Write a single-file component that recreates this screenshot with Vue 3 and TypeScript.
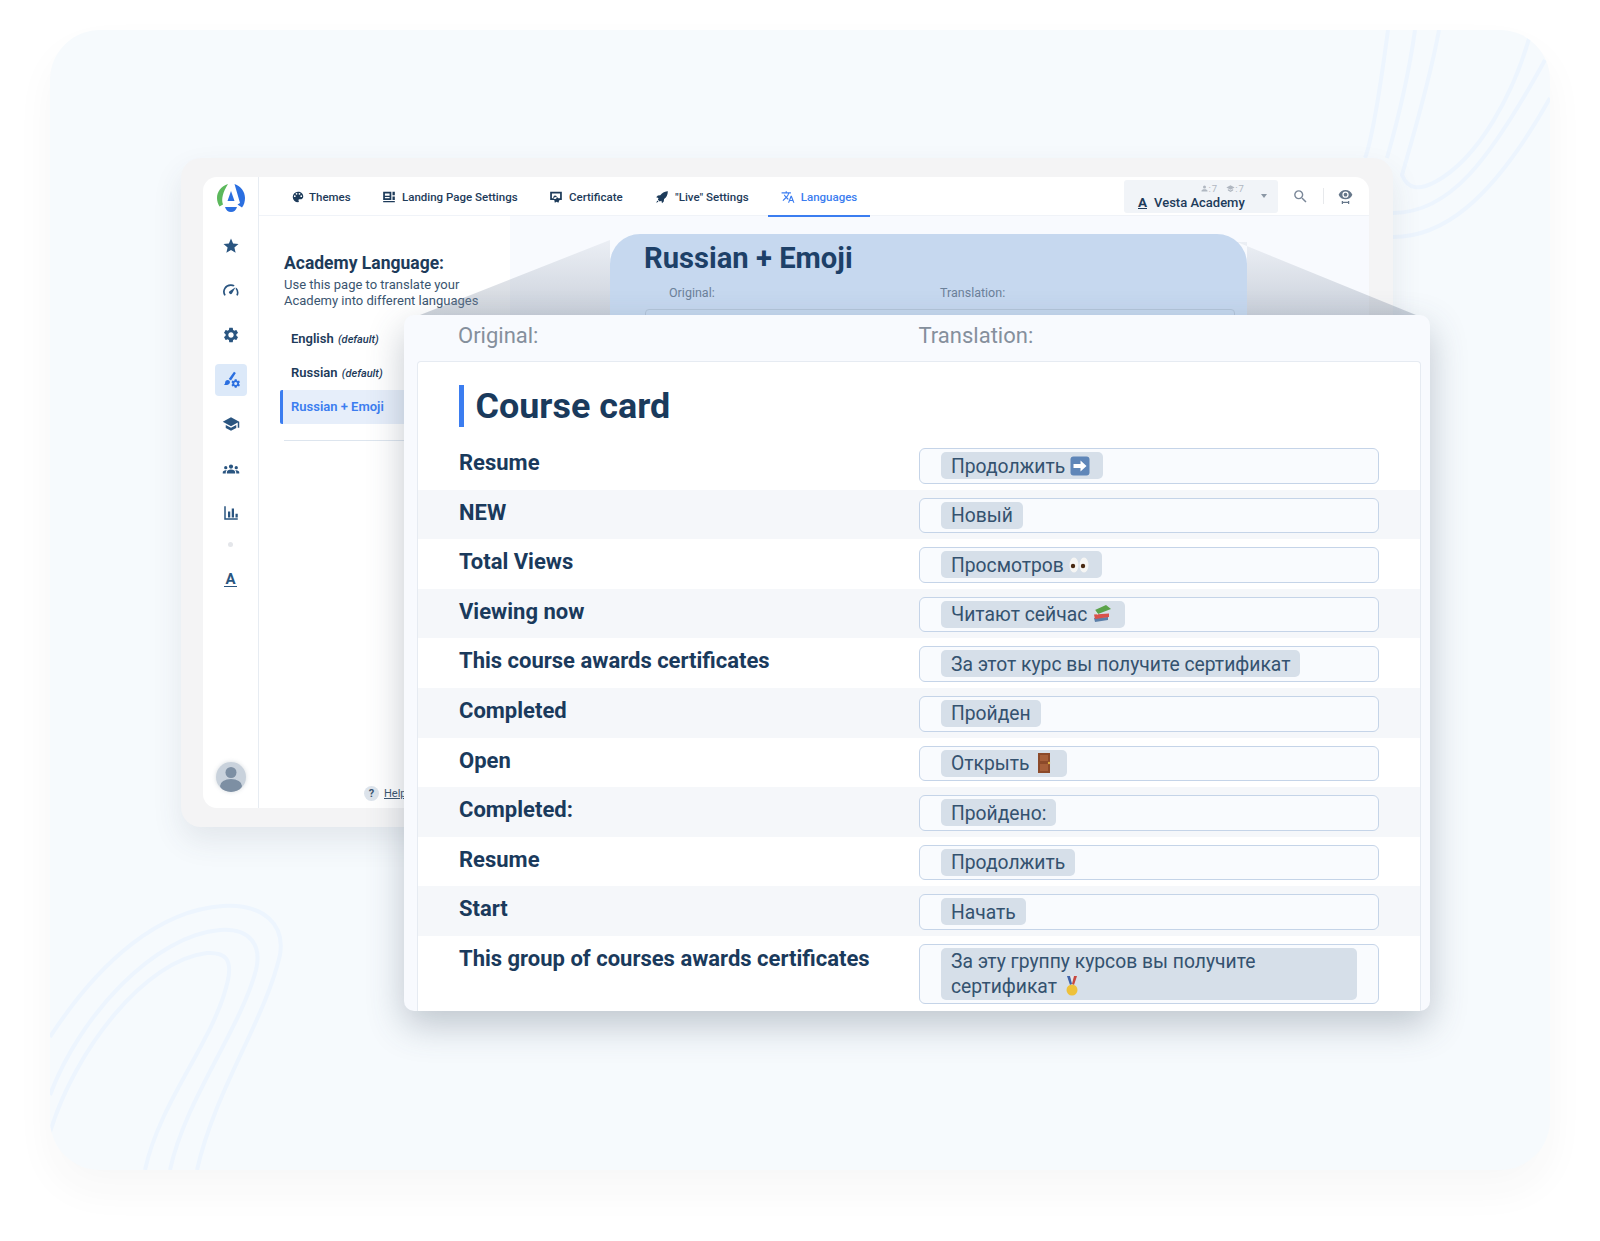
<template>
  <div class="page">
    <section class="panel">
      <svg class="curves" viewBox="0 0 1500 1140" fill="none">
        <path d="M0 1007C50 930 110 880 173 876C215 874 235 895 230 925C215 990 165 1060 147 1140" />
        <path d="M0 1065C30 985 105 905 170 900C200 898 212 915 206 940C190 1000 135 1070 120 1140" />
        <path d="M0 1102C25 1020 95 930 157 923C176 922 182 930 178 950C165 1010 110 1070 95 1140" />
        <path d="M1338 0C1330 60 1322 110 1315 128" />
        <path d="M1365 0C1358 50 1345 100 1337 128" />
        <path d="M1389 0C1380 50 1362 110 1352 145C1358 160 1370 160 1385 152C1430 128 1465 60 1480 5" />
        <path d="M1343 183C1400 183 1440 130 1495 30" />
        <path d="M1343 207C1390 207 1440 175 1500 68" />
      </svg>

      <div class="window">
        <div class="app">
          <aside class="rail">
            <svg class="logo" viewBox="0 0 28 28">
              <path d="M11 0C4 2 0 8 0 14c0 3 1 6 2.500 8.500L6 20.500C4 15 6 8 11 0z" fill="#5cb85c" />
              <path d="M17.500 0C24 2 28 8 28 14c0 3.500-1 7-3 9.500l-4.500-3L23 19z" fill="#2b6fe0" />
              <path d="M14 7l3.500 10h-7z" fill="#2b6fe0" />
              <path d="M8 23h12c-.8 3-3 5-6 5s-5.200-2-6-5z" fill="#2b6fe0" />
            </svg>
            <nav class="rail-icons">
              <div v-for="icon in railIcons" :key="icon.name" class="rail-item" :class="{ active: icon.name === 'brush' }">
                <svg viewBox="0 0 24 24" class="rail-svg">
                  <path v-for="(d, i) in icon.paths" :key="i" :d="d" />
                </svg>
              </div>
            </nav>
            <span class="rail-dot"></span>
            <span class="rail-a">A</span>
            <div class="avatar">
              <svg viewBox="0 0 30 30">
                <circle cx="15" cy="10.500" r="5.500" fill="#7d8fa3" />
                <ellipse cx="15" cy="24" rx="11" ry="7" fill="#7d8fa3" />
              </svg>
            </div>
          </aside>

          <div class="main">
            <header class="topbar">
              <a v-for="tab in tabs" :key="tab.label" class="tab" :class="{ current: tab.current }" :style="{ width: tab.width + 'px' }">
                <svg viewBox="0 0 24 24" class="tab-svg"><path :d="tab.icon" /></svg>
                {{ tab.label }}
              </a>
              <div class="academy">
                <div class="academy-text">
                  <div class="stats">
                    <svg viewBox="0 0 24 24"><path d="M12 4a4 4 0 1 1 0 8 4 4 0 0 1 0-8zm0 10c4.400 0 8 1.800 8 4v2H4v-2c0-2.200 3.600-4 8-4z" /></svg>:7
                    <svg viewBox="0 0 24 24" class="cap"><path d="M5 13.180v4L12 21l7-3.820v-4L12 17zM12 3L1 9l11 6 11-6z" /></svg>:7
                  </div>
                  <div class="academy-name"><span class="under-a">A</span>Vesta Academy</div>
                </div>
                <span class="caret"></span>
              </div>
              <svg viewBox="0 0 24 24" class="search"><path d="M15.500 14h-.79l-.28-.27A6.470 6.470 0 0 0 16 9.500 6.500 6.500 0 1 0 9.500 16c1.610 0 3.090-.59 4.230-1.570l.27.28v.79l5 4.990L20.490 19l-4.990-5zm-6 0C7.010 14 5 11.990 5 9.500S7.010 5 9.500 5 14 7.010 14 9.500 11.990 14 9.500 14z" /></svg>
              <span class="divider"></span>
              <svg viewBox="0 0 24 24" class="eye">
                <path d="M12 1.500c-5 0-9 3-11 7.500 2 4.500 6 7.500 11 7.500s9-3 11-7.500c-2-4.500-6-7.500-11-7.500zm0 12.500a5 5 0 1 1 0-10 5 5 0 0 1 0 10zm0-8a3 3 0 1 0 0 6 3 3 0 0 0 0-6z" />
                <path d="M6 19h2v1.500h8V19h2v5h-2v-1.500H8V24H6z" />
              </svg>
            </header>

            <div class="body">
              <div class="languages">
                <h3>Academy Language:</h3>
                <p>Use this page to translate your<br />Academy into different languages</p>
                <ul>
                  <li>English <em>(default)</em></li>
                  <li>Russian <em>(default)</em></li>
                  <li class="selected">Russian + Emoji</li>
                </ul>
                <hr />
                <div class="help"><span class="help-mark">?</span><u>Help</u></div>
              </div>
              <div class="content">
                <div class="preview">
                  <h2>Russian + Emoji</h2>
                  <div class="preview-heads"><span>Original:</span><span>Translation:</span></div>
                  <div class="preview-box"></div>
                </div>
              </div>
            </div>
          </div>
        </div>
      </div>

      <svg class="wedge" viewBox="0 0 1500 1140">
        <defs>
          <linearGradient id="wedgeFill" x1="0" y1="0" x2="0" y2="1">
            <stop offset="0" stop-color="#8b99ad" stop-opacity="0.12" />
            <stop offset="1" stop-color="#7f8ca0" stop-opacity="0.38" />
          </linearGradient>
        </defs>
        <path d="M560 210L370 285H560z" fill="url(#wedgeFill)" />
        <path d="M1187 212L1366 285H1197V212z" fill="url(#wedgeFill)" />
      </svg>

      <div class="card">
        <div class="card-heads"><span>Original:</span><span>Translation:</span></div>
        <div class="sheet">
          <h1>Course card</h1>
          <div v-for="(row, i) in rows" :key="i" class="row">
            <div class="label">{{ row.label }}</div>
            <div class="field">
              <span class="chip">
                {{ row.text }}
                <svg v-if="row.emoji === 'arrow'" class="emoji" viewBox="0 0 20 20">
                  <rect x="0.500" y="0.500" width="19" height="19" rx="3" fill="#5f86b8" />
                  <path d="M3.500 8h7V4.500l6 5.500-6 5.500V12h-7z" fill="#fff" />
                </svg>
                <svg v-else-if="row.emoji === 'eyes'" class="emoji" viewBox="0 0 20 20">
                  <ellipse cx="5" cy="10" rx="4.500" ry="7.500" fill="#f6f6f4" />
                  <ellipse cx="15" cy="10" rx="4.500" ry="7.500" fill="#f6f6f4" />
                  <circle cx="4" cy="11" r="2.200" fill="#4a2a12" />
                  <circle cx="14" cy="11" r="2.200" fill="#4a2a12" />
                </svg>
                <svg v-else-if="row.emoji === 'books'" class="emoji" viewBox="0 0 20 20">
                  <path d="M2 14l14-1v3L3 18z" fill="#5c7fa8" />
                  <path d="M2 10.500l15-1v3.500L3 15z" fill="#d9524a" />
                  <path d="M3 6l11-5 5 4-13 5z" fill="#5aa34a" />
                  <path d="M3 6l3 4v1L3 8z" fill="#dfe5dc" />
                </svg>
                <svg v-else-if="row.emoji === 'door'" class="emoji" viewBox="0 0 20 20">
                  <rect x="4" y="0" width="12" height="20" fill="#8c4a2a" />
                  <rect x="6" y="2" width="8" height="6" fill="#a65f3a" />
                  <rect x="6" y="11" width="8" height="7" fill="#a65f3a" />
                  <circle cx="15" cy="10" r="1.200" fill="#e0b040" />
                </svg>
                <svg v-else-if="row.emoji === 'medal'" class="emoji" viewBox="0 0 20 20">
                  <path d="M5 0h3l2 8-2 1z" fill="#3f62a8" />
                  <path d="M15 0h-3l-2 8 2 1z" fill="#c9483f" />
                  <path d="M8.500 0h3L10 6z" fill="#e8e8e8" />
                  <circle cx="10" cy="14" r="5.500" fill="#eec13a" />
                </svg>
              </span>
            </div>
          </div>
        </div>
      </div>
    </section>
  </div>
</template>

<script setup lang="ts">
interface Row {
  label: string;
  text: string;
  emoji?: 'arrow' | 'eyes' | 'books' | 'door' | 'medal';
}

const rows: Row[] = [
  { label: 'Resume', text: 'Продолжить', emoji: 'arrow' },
  { label: 'NEW', text: 'Новый' },
  { label: 'Total Views', text: 'Просмотров', emoji: 'eyes' },
  { label: 'Viewing now', text: 'Читают сейчас', emoji: 'books' },
  { label: 'This course awards certificates', text: 'За этот курс вы получите сертификат' },
  { label: 'Completed', text: 'Пройден' },
  { label: 'Open', text: 'Открыть', emoji: 'door' },
  { label: 'Completed:', text: 'Пройдено:' },
  { label: 'Resume', text: 'Продолжить' },
  { label: 'Start', text: 'Начать' },
  { label: 'This group of courses awards certificates', text: 'За эту группу курсов вы получите сертификат', emoji: 'medal' },
];

const railIcons = [
  { name: 'star', paths: ['M12 17.270L18.180 21l-1.640-7.030L22 9.240l-7.190-.61L12 2 9.190 8.630 2 9.240l5.460 4.730L5.820 21z'] },
  { name: 'gauge', paths: ['M12 3a10 10 0 0 0-9 15.300l2-1.100A7.800 7.800 0 0 1 12 5.200c1.200 0 2.300.3 3.300.8l1.600-1.600A10 10 0 0 0 12 3zM21 18.300a10 10 0 0 0-1.600-10.800l-1.500 1.500a7.800 7.800 0 0 1 1.100 8.300zM18 7l-7.500 5a2.200 2.200 0 1 0 3 3z'] },
  { name: 'gear', paths: ['M19.140 12.940c.04-.3.06-.61.06-.94 0-.32-.02-.64-.07-.94l2.030-1.580a.49.49 0 0 0 .12-.61l-1.920-3.320a.488.488 0 0 0-.59-.22l-2.390.96c-.5-.38-1.030-.7-1.620-.94l-.36-2.540a.484.484 0 0 0-.48-.41h-3.840c-.24 0-.43.17-.47.41l-.36 2.540c-.59.24-1.130.57-1.620.94l-2.390-.96c-.22-.08-.47 0-.59.22L2.740 8.870c-.12.21-.08.47.12.61l2.030 1.580c-.05.3-.09.63-.09.94s.02.64.07.94l-2.030 1.580a.49.49 0 0 0-.12.61l1.920 3.320c.12.22.37.29.59.22l2.390-.96c.5.38 1.030.7 1.620.94l.36 2.54c.05.24.24.41.48.41h3.840c.24 0 .44-.17.47-.41l.36-2.540c.59-.24 1.130-.56 1.620-.94l2.390.96c.22.08.47 0 .59-.22l1.920-3.320c.12-.22.07-.47-.12-.61l-2.010-1.580zM12 15.600c-1.980 0-3.600-1.620-3.600-3.600s1.620-3.600 3.600-3.600 3.600 1.620 3.600 3.600-1.620 3.600-3.600 3.600z'] },
  { name: 'brush', paths: ['M16 1l2.500 1.800-6.500 9.700-3-1.800zM7.500 12c2.300 0 3.500 1.700 3 3.500-.6 2.300-3.500 3.500-8 3 1.800-1.200 1.300-2.300 1.800-4 .5-1.500 1.700-2.500 3.200-2.500z', 'M17 11h2.500l.4 1.600 1.200.7 1.600-.5 1.200 2.100-1.200 1.100v1.400l1.200 1.100-1.200 2.100-1.600-.5-1.200.7-.4 1.600H17l-.4-1.600-1.200-.7-1.600.5-1.200-2.100 1.200-1.100V16l-1.200-1.100 1.200-2.100 1.600.5 1.200-.7zm1.250 3.700a2 2 0 1 0 0 4 2 2 0 0 0 0-4z'] },
  { name: 'school', paths: ['M5 13.180v4L12 21l7-3.820v-4L12 17l-7-3.820zM12 3L1 9l11 6 9-4.910V17h2V9L12 3z'] },
  { name: 'groups', paths: ['M12 6a2.800 2.800 0 1 1 0 5.600A2.800 2.800 0 0 1 12 6zM5 8a2.200 2.200 0 1 1 0 4.400A2.200 2.200 0 0 1 5 8zm14 0a2.200 2.200 0 1 1 0 4.400A2.200 2.200 0 0 1 19 8zM12 12.800c3 0 5.500 1.500 5.500 3.400V18h-11v-1.800c0-1.900 2.500-3.400 5.500-3.400zM5 13.500c.5 0 1 0 1.400.2-.9.8-1.400 1.700-1.400 2.700V18H1v-1.700c0-1.500 1.800-2.800 4-2.800zm14 0c2.200 0 4 1.300 4 2.800V18h-4v-1.600c0-1-.5-1.900-1.400-2.700.4-.2.900-.2 1.400-.2z'] },
  { name: 'chart', paths: ['M3 3h2v16h16v2H3zM8 10h3v8H8zM13 6h3v12h-3zM18 13h3v5h-3z'] },
];

const tabs = [
  { label: 'Themes', width: 91, icon: 'M12 3a9 9 0 0 0 0 18c.83 0 1.500-.67 1.500-1.500 0-.39-.15-.74-.39-1.010-.23-.26-.38-.61-.38-.99 0-.83.67-1.500 1.500-1.500H16c2.760 0 5-2.240 5-5 0-4.420-4.030-8-9-8zm-5.500 9a1.500 1.500 0 1 1 0-3 1.500 1.500 0 0 1 0 3zm3-4a1.500 1.500 0 1 1 0-3 1.500 1.500 0 0 1 0 3zm5 0a1.500 1.500 0 1 1 0-3 1.500 1.500 0 0 1 0 3zm3 4a1.500 1.500 0 1 1 0-3 1.500 1.500 0 0 1 0 3z' },
  { label: 'Landing Page Settings', width: 167, icon: 'M2 3h14v14H2zM5 6v4h8V6zM5 12v2h8v-2zM18 3h4v6h-4zM18 11h4v6h-4zM2 19h20v2H2z' },
  { label: 'Certificate', width: 106, icon: 'M2 3h20v14h-4l-2 5-3-2-3 2-1-5H2zM5 6v8h3a5 5 0 0 1 8 0h3V6zM12 10a3 3 0 1 0 0 5 3 3 0 0 0 0-5z' },
  { label: '"Live" Settings', width: 113, icon: 'M21 2c-5 .5-9 3-12 7l-4 .5-3 3 4 1-1 3 3 3 3-1 1 4 3-3 .5-4c4-3 6.500-7 6.500-13.500zM4 18l-2 4 4-2z' },
  { label: 'Languages', width: 102, current: true, icon: 'M12.870 15.070l-2.540-2.510.03-.03A17.520 17.520 0 0 0 14.070 6H17V4h-7V2H8v2H1v1.990h11.170C11.500 7.920 10.440 9.750 9 11.350 8.070 10.320 7.300 9.190 6.690 8h-2c.73 1.630 1.730 3.170 2.980 4.560l-5.090 5.020L4 19l5-5 3.110 3.110.76-2.040zM18.500 10h-2L12 22h2l1.120-3h4.750L21 22h2l-4.500-12zm-2.620 7l1.620-4.330L19.120 17h-3.240z' },
];
</script>

<style>
html,
body {
  margin: 0;
  background: #fff;
}
</style>

<style scoped>
* {
  box-sizing: border-box;
}

.page {
  width: 1600px;
  height: 1241px;
  padding: 30px 50px 71px;
  font-family: Roboto, "Noto Sans", sans-serif;
  color: #1d3b5a;
  overflow: hidden;
}

.panel {
  position: relative;
  height: 1140px;
  padding: 128px 0 0 131px;
  background: #f6fafd;
  border-radius: 50px;
  box-shadow: 0 20px 40px rgba(40, 40, 40, 0.04);
}

.curves,
.wedge {
  position: absolute;
  left: 0;
  top: 0;
  width: 1500px;
  height: 1140px;
}

.curves {
  border-radius: 50px;
}

.curves path {
  stroke: #edf5fe;
  stroke-width: 4;
}

.window {
  position: relative;
  width: 1212px;
  height: 669px;
  padding: 19px 24px 19px 22px;
  background: #f4f4f5;
  border-radius: 20px;
  box-shadow: 0 14px 30px rgba(60, 70, 85, 0.1);
}

.app {
  display: flex;
  height: 100%;
  background: #fff;
  border-radius: 14px;
  overflow: hidden;
}

.rail {
  display: flex;
  flex-direction: column;
  align-items: center;
  width: 56px;
  flex: none;
  padding-top: 7px;
  border-right: 1px solid #e7ecf2;
}

.logo {
  width: 28px;
  height: 28px;
}

.rail-icons {
  display: flex;
  flex-direction: column;
  margin-top: 18px;
  gap: 12.500px;
}

.rail-item {
  display: flex;
  align-items: center;
  justify-content: center;
  width: 32px;
  height: 32px;
  border-radius: 4px;
}

.rail-item.active {
  background: #dce9f9;
}

.rail-svg {
  width: 18px;
  height: 18px;
  fill: #2a5580;
}

.active .rail-svg {
  fill: #2b6fe0;
}

.rail-dot {
  width: 5px;
  height: 5px;
  margin-top: 13px;
  border-radius: 50%;
  background: #e4e6ea;
}

.rail-a {
  margin-top: 26px;
  padding: 0 1px;
  font-size: 15px;
  line-height: 13px;
  font-weight: 700;
  color: #2a5580;
  border-bottom: 1.500px solid #2a5580;
}

.avatar {
  width: 30px;
  height: 30px;
  margin-top: auto;
  margin-bottom: 16px;
  border-radius: 50%;
  background: #c9d2dc;
  overflow: hidden;
  box-shadow: 0 0 4px rgba(120, 135, 150, 0.3);
}

.avatar svg {
  display: block;
}

.main {
  flex: 1;
  min-width: 0;
  display: flex;
  flex-direction: column;
}

.topbar {
  display: flex;
  align-items: center;
  flex: none;
  height: 39px;
  padding-left: 32px;
  border-bottom: 1px solid #f0f3f8;
}

.tab {
  position: relative;
  display: flex;
  align-items: center;
  height: 39px;
  padding-top: 2px;
  gap: 6px;
  font-size: 11.500px;
  font-weight: 500;
  color: #1d3b5a;
  white-space: nowrap;
}

.tab:first-child {
  gap: 4px;
}

.tab-svg {
  width: 14px;
  height: 14px;
  fill: #1d3b5a;
  flex: none;
}

.tab.current {
  color: #3b7df0;
  justify-content: center;
}

.tab.current .tab-svg {
  fill: #3b7df0;
}

.tab.current::after {
  content: "";
  position: absolute;
  left: 0;
  right: 0;
  bottom: -1px;
  height: 2px;
  background: #3b7df0;
}

.academy {
  display: flex;
  align-items: center;
  width: 154px;
  height: 33px;
  margin-left: 254px;
  padding: 0 11px 0 14px;
  background: #f1f4f8;
  border-radius: 3px;
}

.academy-text {
  flex: none;
}

.stats {
  display: flex;
  justify-content: flex-end;
  align-items: center;
  height: 10px;
  margin-top: 2px;
  font-size: 9.500px;
  letter-spacing: 1px;
  color: #b0b7c1;
}

.stats svg {
  width: 9px;
  height: 9px;
  fill: #b0b7c1;
}

.stats .cap {
  margin-left: 8px;
}

.academy-name {
  display: flex;
  align-items: center;
  font-size: 13px;
  line-height: 17px;
  font-weight: 500;
  color: #1d3b5a;
  white-space: nowrap;
}

.under-a {
  margin-right: 7px;
  font-size: 13.500px;
  line-height: 12px;
  font-weight: 700;
  border-bottom: 1px solid #1d3b5a;
}

.caret {
  width: 0;
  height: 0;
  margin-left: auto;
  border: 3px solid transparent;
  border-top: 4px solid #8b97a5;
  border-bottom: 0;
}

.search {
  width: 17px;
  height: 17px;
  margin-left: 14px;
  fill: #7a8798;
  flex: none;
}

.divider {
  width: 1px;
  height: 16px;
  margin-left: 14px;
  background: #e7e9ec;
}

.eye {
  width: 15px;
  height: 15px;
  margin-left: 14px;
  fill: #66778a;
  flex: none;
}

.body {
  flex: 1;
  display: flex;
  min-height: 0;
}

.languages {
  position: relative;
  width: 251px;
  flex: none;
  padding: 37px 0 0 25px;
  background: #fff;
}

.languages h3 {
  margin: 0;
  font-size: 17.500px;
  line-height: 20px;
  font-weight: 700;
  color: #1d3b5a;
}

.languages p {
  margin: 4px 0 0;
  font-size: 13px;
  line-height: 16px;
  color: #3a5570;
}

.languages ul {
  margin: 13px 0 0 -4px;
  padding: 0;
  list-style: none;
}

.languages li {
  height: 34px;
  padding-left: 11px;
  font-size: 13px;
  line-height: 33px;
  font-weight: 600;
  color: #1d3b5a;
}

.languages em {
  margin-left: 1px;
  font-size: 11px;
  font-weight: 500;
}

.languages li.selected {
  padding-left: 8px;
  border-left: 3px solid #3b7df0;
  border-radius: 2px;
  background: #e6eefa;
  color: #3b7df0;
}

.languages hr {
  width: 220px;
  margin: 16px 0 0;
  border: 0;
  border-top: 1px solid #dde5ee;
}

.help {
  position: absolute;
  left: 105px;
  bottom: 7px;
  display: flex;
  align-items: center;
  gap: 5px;
  font-size: 11px;
  color: #3a5570;
}

.help-mark {
  width: 15px;
  height: 15px;
  border-radius: 50%;
  background: #dde4ec;
  font-weight: 700;
  line-height: 15px;
  text-align: center;
}

.content {
  flex: 1;
  padding: 18px 0 0 100px;
  background: #f8fafe;
}

.preview {
  width: 637px;
  height: 100px;
  padding: 6px 12px 0 34px;
  background: #c6d8ef;
  border-radius: 30px 30px 0 0;
}

.preview h2 {
  margin: 0;
  font-size: 29.200px;
  line-height: 36px;
  font-weight: 700;
  color: #1d4068;
}

.preview-heads {
  display: flex;
  margin: 10px 0 0 25px;
  font-size: 12.500px;
  line-height: 14px;
  color: #6c819a;
}

.preview-heads span:first-child {
  width: 271px;
}

.preview-box {
  height: 40px;
  margin: 9px 0 0 1px;
  border: 1px solid #b4c5da;
  border-radius: 4px;
}

.wedge {
  pointer-events: none;
}

.card {
  position: absolute;
  left: 354px;
  top: 285px;
  width: 1026px;
  height: 696px;
  padding: 0 9px 0 13px;
  background: #f8fafe;
  border-radius: 10px;
  box-shadow: 0 14px 36px rgba(60, 75, 95, 0.3);
  overflow: hidden;
}

.card-heads {
  display: flex;
  height: 46px;
  padding: 8px 0 0 41px;
  font-size: 22px;
  line-height: 26px;
  color: #858f9c;
}

.card-heads span:first-child {
  width: 460.500px;
}

.sheet {
  height: 650px;
  padding-top: 23px;
  background: #fff;
  border: 1px solid #e6ebf2;
  border-bottom: 0;
  border-radius: 4px 4px 0 0;
}

.sheet h1 {
  height: 42px;
  margin: 0 0 13px 41px;
  padding: 1px 0 0 11.500px;
  border-left: 5.500px solid #3b7df0;
  font-size: 35.900px;
  line-height: 41px;
  font-weight: 700;
  color: #1a3a5c;
}

.row {
  display: flex;
  min-height: 49.600px;
  padding: 8px 41px 6px 41px;
}

.row:nth-of-type(even) {
  background: #f5f7fa;
}

.label {
  width: 460px;
  flex: none;
  padding-top: 1px;
  font-size: 22px;
  line-height: 28px;
  font-weight: 700;
  color: #1a3a5c;
}

.field {
  display: flex;
  align-items: flex-start;
  flex: 1;
  min-height: 35.600px;
  padding: 3px 21px 3px 21px;
  background: #f9fbfe;
  border: 1.500px solid #c5d4e8;
  border-radius: 6px;
}

.chip {
  padding: 1.500px 10px 0.500px;
  background: #d6dfe9;
  border-radius: 5px;
  font-size: 19.300px;
  line-height: 25px;
  color: #34526f;
}

.emoji {
  display: inline-block;
  width: 20px;
  height: 20px;
  margin-right: 3px;
  vertical-align: -3px;
}
</style>
